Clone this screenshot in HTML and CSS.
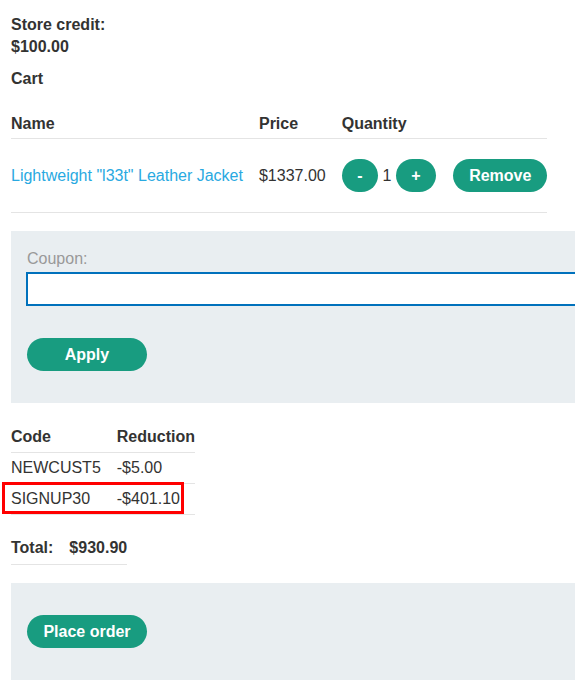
FILE: index.html
```html
<!DOCTYPE html>
<html>
<head>
<meta charset="utf-8">
<link rel="stylesheet" href="styles.css">
</head>
<body>
<div class="page">
  <p class="credit">Store credit:<br>$100.00</p>
  <p class="title">Cart</p>
  <table class="cart">
    <thead>
      <tr><th>Name</th><th>Price</th><th>Quantity</th><th></th></tr>
    </thead>
    <tbody>
      <tr>
        <td><a class="link" href="#">Lightweight "l33t" Leather Jacket</a></td>
        <td>$1337.00</td>
        <td class="qty"><button class="btn">-</button> 1 <button class="btn">+</button></td>
        <td><button class="btn btn-remove">Remove</button></td>
      </tr>
    </tbody>
  </table>

  <form class="panel coupon">
    <label class="label" for="coupon">Coupon:</label>
    <input class="input" id="coupon" type="text">
    <button class="btn btn-wide" type="button">Apply</button>
  </form>

  <div class="codes-wrap">
    <table class="codes">
      <thead>
        <tr><th>Code</th><th>Reduction</th></tr>
      </thead>
      <tbody>
        <tr><td>NEWCUST5</td><td>-$5.00</td></tr>
        <tr><td>SIGNUP30</td><td>-$401.10</td></tr>
      </tbody>
    </table>
    <div class="highlight"></div>
  </div>

  <table class="total">
    <tr><th>Total:</th><th>$930.90</th></tr>
  </table>

  <div class="panel order">
    <button class="btn btn-wide" type="button">Place order</button>
  </div>
</div>
</body>
</html>
```

FILE: styles.css
```css
html, body {
  margin: 0;
  padding: 0;
  overflow-x: hidden;
}

body {
  font-family: "Liberation Sans", Arial, sans-serif;
  font-size: 16px;
  line-height: 22px;
  color: #333332;
  background: #fff;
}

.page {
  padding: 14px 0 20px 11px;
  width: 600px;
}

.credit {
  margin: 0;
  font-weight: bold;
}

.title {
  margin: 10px 0 0;
  font-weight: bold;
}

table {
  border-collapse: collapse;
  border-spacing: 0;
}

th {
  text-align: left;
  font-weight: bold;
  padding: 0 16px 3px 0;
  border-bottom: 1px solid #e4e4e4;
}

td {
  padding: 0 16px 0 0;
  border-bottom: 1px solid #e4e4e4;
}

th:last-child,
td:last-child {
  padding-right: 0;
}

.cart {
  margin-top: 23px;
}

.cart td {
  padding-top: 20px;
  padding-bottom: 20px;
  line-height: 33px;
  white-space: nowrap;
}

.cart td.qty {
  padding-right: 17px;
}

.cart td:last-child {
  padding-right: 0;
}

.link {
  color: #29a9e1;
  text-decoration: none;
}

.btn {
  display: inline-block;
  height: 33px;
  line-height: 33px;
  padding: 0 15.5px;
  border: none;
  border-radius: 20px;
  background: #189c80;
  color: #fff;
  font-family: "Liberation Sans", Arial, sans-serif;
  font-size: 16px;
  font-weight: bold;
  vertical-align: baseline;
  cursor: pointer;
}

.btn-remove {
  padding: 0 16px;
}

.btn-wide {
  min-width: 120px;
}

.panel {
  background: #e9eef1;
  margin: 18px 0 0;
}

.coupon {
  padding: 17px 16px 32px;
}

.label {
  display: block;
  color: #999;
}

.input {
  display: block;
  box-sizing: border-box;
  width: 100%;
  height: 34px;
  margin: 2px 0 0 -1px;
  border: 2px solid #0071bc;
  background: #fff;
  outline: none;
  font-family: inherit;
  font-size: 16px;
}

.coupon .btn {
  margin-top: 32px;
}

.codes-wrap {
  position: relative;
  margin-top: 23px;
  width: max-content;
}

.codes th {
  padding-bottom: 4px;
}

.codes td {
  padding-top: 4px;
  padding-bottom: 4px;
}

.highlight {
  position: absolute;
  left: -9px;
  top: 56px;
  width: 182px;
  height: 32px;
  box-sizing: border-box;
  border: 3px solid #f00;
}

.total {
  margin-top: 22px;
}

.total th {
  padding-bottom: 5px;
  padding-right: 16px;
}

.total th:last-child {
  padding-right: 0;
}

.order {
  padding: 32px 16px;
}
```
